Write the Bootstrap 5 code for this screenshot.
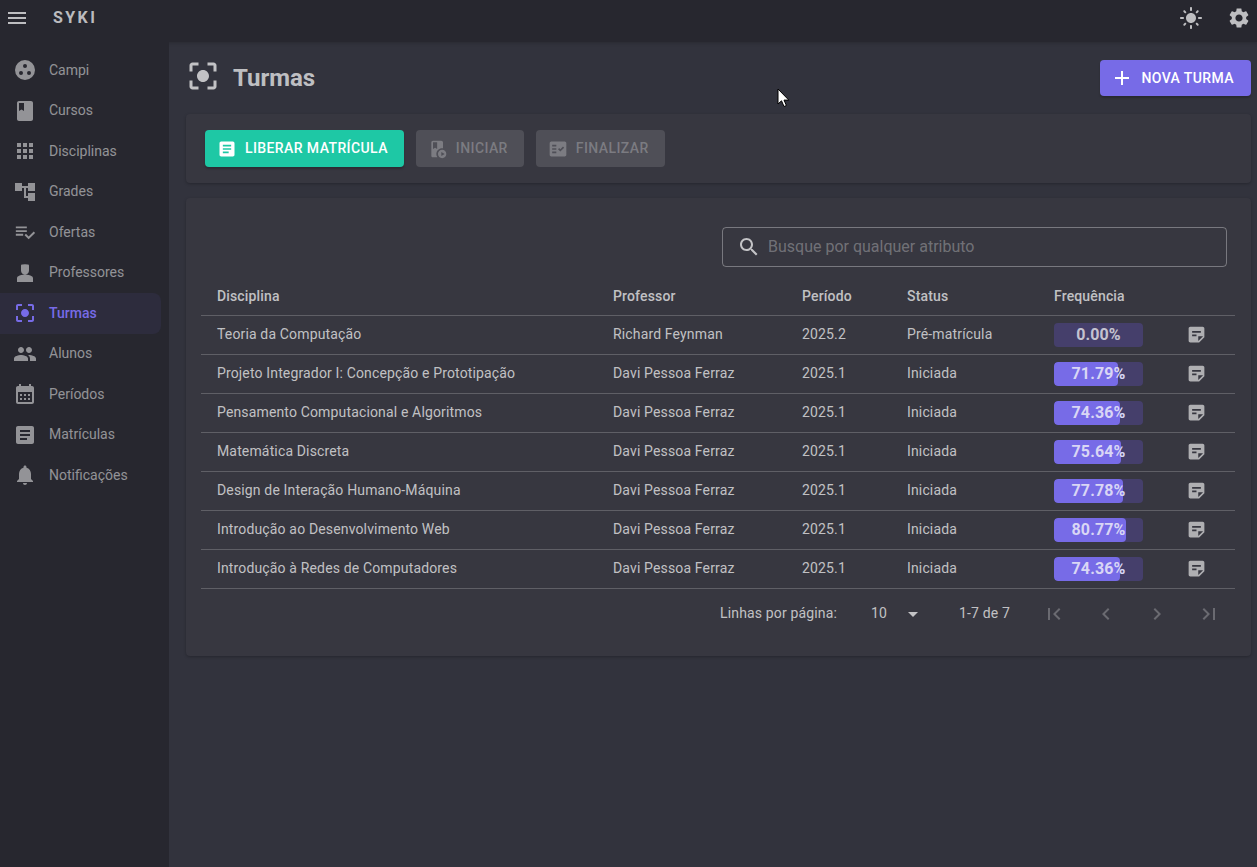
<!DOCTYPE html>
<html lang="pt-BR">
<head>
<meta charset="utf-8">
<title>Syki - Turmas</title>
<link href="https://cdn.jsdelivr.net/npm/bootstrap@5.3.0/dist/css/bootstrap.min.css" rel="stylesheet">
<style>
html,body{height:100%}
body{background:#32333d;font-family:Roboto,"Liberation Sans",sans-serif;color:rgba(255,255,255,.7);font-size:14px;overflow:hidden}
svg.ic{width:24px;height:24px;fill:currentColor;flex:none;display:block}
.top-strip{height:42px;background:#27272f;padding:0 6px 6px 5px;box-shadow:0 1px 4px rgba(0,0,0,.2)}
.brand-name{font-size:16px;font-weight:700;letter-spacing:2.4px;margin-left:24px;color:rgba(255,255,255,.7)}
.top-gap{gap:24px;padding-right:0}
.shell{height:825px}
.side{width:169px;background:#27272f;padding-top:8px;flex:none}
.side-link{height:40.5px;width:161px;padding-left:13px;gap:12px;color:rgba(255,255,255,.5);text-decoration:none;border-radius:0 8px 8px 0}
.side-link.on{color:#776be7;background:#2d2c3d;font-weight:500}
.side-link svg.ic-small{width:22px;height:22px;margin:0 1px}
.main-area{padding:15px 6px 0 17px;min-width:0}
.page-head{height:42px;margin-bottom:15px}
.head-ic{width:36px;height:36px;margin:-4px 0 0 -1.5px;color:rgba(255,255,255,.7);fill:currentColor;flex:none;display:block}
.page-title{font-size:24px;font-weight:700;margin:0 0 0 12.5px;color:rgba(255,255,255,.7);line-height:1}
.act-btn{font-size:14px;font-weight:500;letter-spacing:.4px;height:37px;padding:0 16px 0 12px;gap:8px;border:0;border-radius:4px;text-transform:uppercase;display:inline-flex;align-items:center}
.act-btn svg.ic{width:20px;height:20px}
.btn-new{background:#776be7;color:#fff;height:36px;padding:0 17px 0 10.500px;gap:7px;box-shadow:0 2px 2px rgba(0,0,0,.2)}
.btn-new:hover{background:#776be7;color:#fff}
.btn-new svg.ic{width:24px;height:24px}
.btn-lib{background:#1ec8a5;color:#fff;box-shadow:0 2px 2px rgba(0,0,0,.2)}
.btn-lib:hover{background:#1ec8a5;color:#fff}
.btn-off,.btn-off:disabled{background:rgba(255,255,255,.12);color:rgba(255,255,255,.26);opacity:1}
.panel{background:#373740;border-radius:4px;box-shadow:0 1px 3px rgba(0,0,0,.25)}
.panel-acts{height:69px;padding:16px 19px;gap:12px;margin-bottom:15px}
.panel-table{height:458px;padding:29px 16px 0 15px}
.search-wrap{width:505px;height:40px;margin-right:8px;border:1px solid rgba(255,255,255,.33);border-radius:4px;padding:0 14px;gap:7px;margin-bottom:10px;margin-left:auto;font-size:16px;color:rgba(255,255,255,.3)}
.search-wrap svg.ic{color:rgba(255,255,255,.7)}
.tb-grid{--bs-table-bg:transparent;--bs-table-color:rgba(255,255,255,.7);--bs-table-border-color:rgba(255,255,255,.2);table-layout:fixed;margin:0;width:1034px;font-size:14px;letter-spacing:.15px}
.tb-grid th{font-weight:500;height:39px;padding:0 0 0 16px;vertical-align:middle;color:rgba(255,255,255,.7);border-bottom-width:1px}
.tb-grid td{height:39px;padding:0 0 0 16px;vertical-align:middle;color:rgba(255,255,255,.7)}
.tb-grid thead th{height:38px;padding-top:2px}
.w-a{width:396px}.w-b{width:189px}.w-c{width:105px}.w-d{width:147px}.w-e{width:134px}
.freq{width:89px;height:24px;background:#453f6b;border-radius:4px;--bs-progress-bar-bg:#776be7;position:relative}
.freq .progress-bar{border-radius:4px}
.freq-txt{position:absolute;inset:0;display:flex;align-items:center;justify-content:center;font-size:16px;font-weight:700;color:rgba(255,255,255,.7);letter-spacing:.1px}
.freq-txt.lit{color:#d9d6f5}
.note-ic{color:rgba(255,255,255,.6);margin-left:-2.500px}
.note-ic svg.ic{width:21px;height:21px}
.pager{height:48px;font-size:14px;letter-spacing:.15px;padding-left:519px;padding-top:2px}
.pg-lbl{width:118px}
.pg-num{width:56px;padding-left:33px}
.pg-drop{margin-left:7px;color:rgba(255,255,255,.7);width:24px}
.pg-range{width:83px;margin-left:34px}
.pg-nav{gap:27.5px;color:rgba(255,255,255,.26)}
.ptr{position:absolute;left:777px;top:88px;width:13px;height:20px}
</style>
</head>
<body>
<header class="top-strip d-flex align-items-center justify-content-between">
  <div class="d-flex align-items-center">
    <svg class="ic" viewBox="0 0 24 24" style="color:rgba(255,255,255,.7)"><path d="M3 18h18v-2H3v2zm0-5h18v-2H3v2zm0-7v2h18V6H3z"/></svg>
    <span class="brand-name">SYKI</span>
  </div>
  <div class="d-flex align-items-center top-gap">
    <svg class="ic" viewBox="0 0 24 24" style="color:rgba(255,255,255,.7)"><path d="M12 7c-2.76 0-5 2.24-5 5s2.24 5 5 5 5-2.24 5-5-2.24-5-5-5zM2 13h2c.55 0 1-.45 1-1s-.45-1-1-1H2c-.55 0-1 .45-1 1s.45 1 1 1zm18 0h2c.55 0 1-.45 1-1s-.45-1-1-1h-2c-.55 0-1 .45-1 1s.45 1 1 1zM11 2v2c0 .55.45 1 1 1s1-.45 1-1V2c0-.55-.45-1-1-1s-1 .45-1 1zm0 18v2c0 .55.45 1 1 1s1-.45 1-1v-2c0-.55-.45-1-1-1s-1 .45-1 1zM5.99 4.58c-.39-.39-1.03-.39-1.41 0-.39.39-.39 1.03 0 1.41l1.06 1.06c.39.39 1.03.39 1.41 0s.39-1.03 0-1.41L5.99 4.58zm12.37 12.37c-.39-.39-1.03-.39-1.41 0-.39.39-.39 1.03 0 1.41l1.06 1.06c.39.39 1.03.39 1.41 0 .39-.39.39-1.03 0-1.41l-1.06-1.06zm1.06-10.96c.39-.39.39-1.03 0-1.41-.39-.39-1.03-.39-1.41 0l-1.06 1.06c-.39.39-.39 1.03 0 1.41s1.03.39 1.41 0l1.06-1.06zM7.05 18.36c.39-.39.39-1.03 0-1.41-.39-.39-1.03-.39-1.41 0l-1.06 1.06c-.39.39-.39 1.03 0 1.41s1.03.39 1.41 0l1.06-1.06z"/></svg>
    <svg class="ic" viewBox="0 0 24 24" style="color:rgba(255,255,255,.7)"><path d="M19.14 12.94c.04-.3.06-.61.06-.94 0-.32-.02-.64-.07-.94l2.03-1.58c.18-.14.23-.41.12-.61l-1.92-3.32c-.12-.22-.37-.29-.59-.22l-2.39.96c-.5-.38-1.03-.7-1.62-.94l-.36-2.54c-.04-.24-.24-.41-.48-.41h-3.84c-.24 0-.43.17-.47.41l-.36 2.54c-.59.24-1.13.57-1.62.94l-2.39-.96c-.22-.08-.47 0-.59.22L2.74 8.87c-.12.21-.08.47.12.61l2.03 1.58c-.05.3-.09.63-.09.94s.02.64.07.94l-2.03 1.58c-.18.14-.23.41-.12.61l1.92 3.32c.12.22.37.29.59.22l2.39-.96c.5.38 1.03.7 1.62.94l.36 2.54c.05.24.24.41.48.41h3.84c.24 0 .44-.17.47-.41l.36-2.54c.59-.24 1.13-.56 1.62-.94l2.39.96c.22.08.47 0 .59-.22l1.92-3.32c.12-.22.07-.47-.12-.61l-2.01-1.58zM12 15.6c-1.98 0-3.6-1.62-3.6-3.6s1.62-3.6 3.6-3.6 3.6 1.62 3.6 3.6-1.62 3.6-3.6 3.6z"/></svg>
  </div>
</header>
<div class="shell d-flex">
  <nav class="side d-flex flex-column">
    <a class="side-link d-flex align-items-center" href="#"><svg class="ic" viewBox="0 0 24 24"><path fill-rule="evenodd" d="M12 2a10 10 0 1 0 0 20 10 10 0 0 0 0-20zM8 17a2 2 0 1 1 0-4 2 2 0 0 1 0 4zm4-7a2 2 0 1 1 0-4 2 2 0 0 1 0 4zm4 7a2 2 0 1 1 0-4 2 2 0 0 1 0 4z"/></svg>Campi</a>
    <a class="side-link d-flex align-items-center" href="#"><svg class="ic" viewBox="0 0 24 24"><path d="M18 2H6c-1.1 0-2 .9-2 2v16c0 1.1.9 2 2 2h12c1.1 0 2-.9 2-2V4c0-1.1-.9-2-2-2zM6 4h5v8l-2.500-1.500L6 12V4z"/></svg>Cursos</a>
    <a class="side-link d-flex align-items-center" href="#"><svg class="ic" viewBox="0 0 24 24"><path d="M4 8h4V4H4v4zm6 12h4v-4h-4v4zm-6 0h4v-4H4v4zm0-6h4v-4H4v4zm6 0h4v-4h-4v4zm6-10v4h4V4h-4zm-6 4h4V4h-4v4zm6 6h4v-4h-4v4zm0 6h4v-4h-4v4z"/></svg>Disciplinas</a>
    <a class="side-link d-flex align-items-center" href="#"><svg class="ic" viewBox="0 0 24 24"><path d="M22 11V3h-7v3H9V3H2v8h7V8h2v10h4v3h7v-8h-7v3h-2V8h2v3z"/></svg>Grades</a>
    <a class="side-link d-flex align-items-center" href="#"><svg class="ic ic-small" viewBox="0 0 24 24"><path d="M14 10H2v2h12v-2zm0-4H2v2h12V6zM2 16h8v-2H2v2zm19.500-4.500L23 13l-6.990 7-4.510-4.500L13 14l3.010 3 5.490-5.500z"/></svg>Ofertas</a>
    <a class="side-link d-flex align-items-center" href="#"><svg class="ic" viewBox="0 0 24 24"><path d="M8 4.800C8 4 8.600 3.500 9.300 3.600L12 3.300l2.700.3c.7-.1 1.300.4 1.300 1.200v4.700c0 2.400-1.800 4-4 4s-4-1.600-4-4zM12 13.500c-2.700 0-5.100.8-6.700 1.800-.8.4-1.300 1.200-1.300 2V21h16v-3.700c0-.8-.5-1.600-1.300-2-1.600-1-4-1.800-6.700-1.800z"/></svg>Professores</a>
    <a class="side-link on d-flex align-items-center" href="#"><svg class="ic" viewBox="0 0 24 24"><path d="M12 8c-2.21 0-4 1.79-4 4s1.79 4 4 4 4-1.79 4-4-1.79-4-4-4zm-7 7H3v4c0 1.1.9 2 2 2h4v-2H5v-4zM5 5h4V3H5c-1.1 0-2 .9-2 2v4h2V5zm14-2h-4v2h4v4h2V5c0-1.1-.9-2-2-2zm0 16h-4v2h4c1.1 0 2-.9 2-2v-4h-2v4z"/></svg>Turmas</a>
    <a class="side-link d-flex align-items-center" href="#"><svg class="ic" viewBox="0 0 24 24"><path d="M16 11c1.66 0 2.99-1.34 2.99-3S17.66 5 16 5c-1.66 0-3 1.34-3 3s1.34 3 3 3zm-8 0c1.66 0 2.99-1.34 2.99-3S9.66 5 8 5C6.34 5 5 6.34 5 8s1.34 3 3 3zm0 2c-2.33 0-7 1.17-7 3.5V19h14v-2.5c0-2.33-4.67-3.5-7-3.5zm8 0c-.29 0-.62.02-.97.05 1.16.84 1.97 1.97 1.97 3.45V19h6v-2.5c0-2.33-4.67-3.5-7-3.5z"/></svg>Alunos</a>
    <a class="side-link d-flex align-items-center" href="#"><svg class="ic" viewBox="0 0 24 24"><path d="M19 4h-1V2h-2v2H8V2H6v2H5c-1.1 0-2 .9-2 2v14c0 1.1.9 2 2 2h14c1.1 0 2-.9 2-2V6c0-1.1-.9-2-2-2zm0 16H5V10h14v10zM7 12h2v2H7zm4 0h2v2h-2zm4 0h2v2h-2zM7 16h2v2H7zm4 0h2v2h-2zm4 0h2v2h-2z"/></svg>Períodos</a>
    <a class="side-link d-flex align-items-center" href="#"><svg class="ic" viewBox="0 0 24 24"><path d="M19 3H5c-1.1 0-2 .9-2 2v14c0 1.1.9 2 2 2h14c1.1 0 2-.9 2-2V5c0-1.1-.9-2-2-2zm-5 14H7v-2h7v2zm3-4H7v-2h10v2zm0-4H7V7h10v2z"/></svg>Matrículas</a>
    <a class="side-link d-flex align-items-center" href="#"><svg class="ic" viewBox="0 0 24 24"><path d="M12 22c1.1 0 2-.9 2-2h-4c0 1.1.89 2 2 2zm6-6v-5c0-3.07-1.64-5.64-4.5-6.32V4c0-.83-.67-1.5-1.5-1.5s-1.5.67-1.5 1.5v.68C7.63 5.36 6 7.92 6 11v5l-2 2v1h16v-1l-2-2z"/></svg>Notificações</a>
  </nav>
  <main class="main-area flex-grow-1">
    <div class="page-head d-flex align-items-center justify-content-between">
      <div class="d-flex align-items-center">
        <svg class="head-ic" viewBox="0 0 24 24"><path d="M12 8c-2.21 0-4 1.79-4 4s1.79 4 4 4 4-1.79 4-4-1.79-4-4-4zm-7 7H3v4c0 1.1.9 2 2 2h4v-2H5v-4zM5 5h4V3H5c-1.1 0-2 .9-2 2v4h2V5zm14-2h-4v2h4v4h2V5c0-1.1-.9-2-2-2zm0 16h-4v2h4c1.1 0 2-.9 2-2v-4h-2v4z"/></svg>
        <h1 class="page-title">Turmas</h1>
      </div>
      <button class="btn act-btn btn-new"><svg class="ic" viewBox="0 0 24 24"><path d="M19 13h-6v6h-2v-6H5v-2h6V5h2v6h6v2z"/></svg>Nova Turma</button>
    </div>
    <section class="panel panel-acts d-flex align-items-start">
      <button class="btn act-btn btn-lib"><svg class="ic" viewBox="0 0 24 24"><path d="M19 3H5c-1.1 0-2 .9-2 2v14c0 1.1.9 2 2 2h14c1.1 0 2-.9 2-2V5c0-1.1-.9-2-2-2zm-5 14H7v-2h7v2zm3-4H7v-2h10v2zm0-4H7V7h10v2z"/></svg>Liberar Matrícula</button>
      <button class="btn act-btn btn-off" disabled><svg class="ic" viewBox="0 0 24 24"><path d="M17 11c.34 0 .67.03 1 .08V4c0-1.1-.9-2-2-2H6c-1.1 0-2 .9-2 2v16c0 1.1.9 2 2 2h5.26A6.97 6.97 0 0 1 10 18c0-3.87 3.13-7 7-7zM6 4h5v8l-2.500-1.500L6 12V4zm11 9c-2.76 0-5 2.24-5 5s2.24 5 5 5 5-2.24 5-5-2.24-5-5-5zm-1 7.500v-5l4 2.500-4 2.500z"/></svg>Iniciar</button>
      <button class="btn act-btn btn-off" disabled><svg class="ic" viewBox="0 0 24 24"><path d="M20 3H4c-1.1 0-2 .9-2 2v14c0 1.1.9 2 2 2h16c1.1 0 2-.9 2-2V5c0-1.1-.9-2-2-2zM10 17H5v-2h5v2zm0-4H5v-2h5v2zm0-4H5V7h5v2zm4.820 6L12 12.160l1.410-1.410 1.410 1.420L17.990 9l1.420 1.420L14.820 15z"/></svg>Finalizar</button>
    </section>
    <section class="panel panel-table">
      <div class="search-wrap d-flex align-items-center"><svg class="ic" viewBox="0 0 24 24"><path d="M15.5 14h-.79l-.28-.27C15.41 12.59 16 11.11 16 9.5 16 5.91 13.09 3 9.5 3S3 5.91 3 9.5 5.91 16 9.5 16c1.61 0 3.09-.59 4.23-1.57l.27.28v.79l5 4.99L20.49 19l-4.99-5zm-6 0C7.01 14 5 11.99 5 9.5S7.01 5 9.5 5 14 7.01 14 9.5 11.99 14 9.5 14z"/></svg>Busque por qualquer atributo</div>
      <table class="table tb-grid">
        <colgroup><col class="w-a"><col class="w-b"><col class="w-c"><col class="w-d"><col class="w-e"><col></colgroup>
        <thead><tr><th>Disciplina</th><th>Professor</th><th>Período</th><th>Status</th><th>Frequência</th><th></th></tr></thead>
        <tbody>
          <tr><td>Teoria da Computação</td><td>Richard Feynman</td><td>2025.2</td><td>Pré-matrícula</td><td><div class="progress freq"><div class="progress-bar" style="width:0%"></div><span class="freq-txt">0.00%</span></div></td><td><span class="note-ic d-block"><svg class="ic" viewBox="0 0 24 24"><path d="M19 3H4.99C3.89 3 3 3.9 3 5l.01 14c0 1.1.89 2 1.99 2h10l6-6V5c0-1.1-.9-2-2-2zM7 8h10v2H7V8zm5 6H7v-2h5v2zm2 5.5V14h5.5L14 19.5z"/></svg></span></td></tr>
          <tr><td>Projeto Integrador I: Concepção e Prototipação</td><td>Davi Pessoa Ferraz</td><td>2025.1</td><td>Iniciada</td><td><div class="progress freq"><div class="progress-bar" style="width:71.79%"></div><span class="freq-txt lit">71.79%</span></div></td><td><span class="note-ic d-block"><svg class="ic" viewBox="0 0 24 24"><path d="M19 3H4.99C3.89 3 3 3.9 3 5l.01 14c0 1.1.89 2 1.99 2h10l6-6V5c0-1.1-.9-2-2-2zM7 8h10v2H7V8zm5 6H7v-2h5v2zm2 5.5V14h5.5L14 19.5z"/></svg></span></td></tr>
          <tr><td>Pensamento Computacional e Algoritmos</td><td>Davi Pessoa Ferraz</td><td>2025.1</td><td>Iniciada</td><td><div class="progress freq"><div class="progress-bar" style="width:74.36%"></div><span class="freq-txt lit">74.36%</span></div></td><td><span class="note-ic d-block"><svg class="ic" viewBox="0 0 24 24"><path d="M19 3H4.99C3.89 3 3 3.9 3 5l.01 14c0 1.1.89 2 1.99 2h10l6-6V5c0-1.1-.9-2-2-2zM7 8h10v2H7V8zm5 6H7v-2h5v2zm2 5.5V14h5.5L14 19.5z"/></svg></span></td></tr>
          <tr><td>Matemática Discreta</td><td>Davi Pessoa Ferraz</td><td>2025.1</td><td>Iniciada</td><td><div class="progress freq"><div class="progress-bar" style="width:75.64%"></div><span class="freq-txt lit">75.64%</span></div></td><td><span class="note-ic d-block"><svg class="ic" viewBox="0 0 24 24"><path d="M19 3H4.99C3.89 3 3 3.9 3 5l.01 14c0 1.1.89 2 1.99 2h10l6-6V5c0-1.1-.9-2-2-2zM7 8h10v2H7V8zm5 6H7v-2h5v2zm2 5.5V14h5.5L14 19.5z"/></svg></span></td></tr>
          <tr><td>Design de Interação Humano-Máquina</td><td>Davi Pessoa Ferraz</td><td>2025.1</td><td>Iniciada</td><td><div class="progress freq"><div class="progress-bar" style="width:77.78%"></div><span class="freq-txt lit">77.78%</span></div></td><td><span class="note-ic d-block"><svg class="ic" viewBox="0 0 24 24"><path d="M19 3H4.99C3.89 3 3 3.9 3 5l.01 14c0 1.1.89 2 1.99 2h10l6-6V5c0-1.1-.9-2-2-2zM7 8h10v2H7V8zm5 6H7v-2h5v2zm2 5.5V14h5.5L14 19.5z"/></svg></span></td></tr>
          <tr><td>Introdução ao Desenvolvimento Web</td><td>Davi Pessoa Ferraz</td><td>2025.1</td><td>Iniciada</td><td><div class="progress freq"><div class="progress-bar" style="width:80.77%"></div><span class="freq-txt lit">80.77%</span></div></td><td><span class="note-ic d-block"><svg class="ic" viewBox="0 0 24 24"><path d="M19 3H4.99C3.89 3 3 3.9 3 5l.01 14c0 1.1.89 2 1.99 2h10l6-6V5c0-1.1-.9-2-2-2zM7 8h10v2H7V8zm5 6H7v-2h5v2zm2 5.5V14h5.5L14 19.5z"/></svg></span></td></tr>
          <tr><td>Introdução à Redes de Computadores</td><td>Davi Pessoa Ferraz</td><td>2025.1</td><td>Iniciada</td><td><div class="progress freq"><div class="progress-bar" style="width:74.36%"></div><span class="freq-txt lit">74.36%</span></div></td><td><span class="note-ic d-block"><svg class="ic" viewBox="0 0 24 24"><path d="M19 3H4.99C3.89 3 3 3.9 3 5l.01 14c0 1.1.89 2 1.99 2h10l6-6V5c0-1.1-.9-2-2-2zM7 8h10v2H7V8zm5 6H7v-2h5v2zm2 5.5V14h5.5L14 19.5z"/></svg></span></td></tr>
        </tbody>
      </table>
      <div class="pager d-flex align-items-center">
        <span class="pg-lbl">Linhas por página:</span>
        <span class="pg-num">10</span>
        <span class="pg-drop"><svg class="ic" viewBox="0 0 24 24"><path d="M7 10l5 5 5-5z"/></svg></span>
        <span class="pg-range">1-7 de 7</span>
        <span class="pg-nav d-flex">
          <svg class="ic" viewBox="0 0 24 24"><path d="M18.41 16.59L13.82 12l4.59-4.59L17 6l-6 6 6 6zM6 6h2v12H6z"/></svg>
          <svg class="ic" viewBox="0 0 24 24"><path d="M15.41 7.41L14 6l-6 6 6 6 1.41-1.41L10.83 12z"/></svg>
          <svg class="ic" viewBox="0 0 24 24"><path d="M10 6L8.59 7.41 13.17 12l-4.58 4.59L10 18l6-6z"/></svg>
          <svg class="ic" viewBox="0 0 24 24"><path d="M5.59 7.41L10.18 12l-4.59 4.59L7 18l6-6-6-6zM16 6h2v12h-2z"/></svg>
        </span>
      </div>
    </section>
  </main>
</div>
<svg class="ptr" viewBox="0 0 13 20"><path d="M1 1v15l3.5-3.2L7 18.5l2.4-1-2.4-5.4h4.8z" fill="#fff" stroke="#000" stroke-width="1"/></svg>
</body>
</html>
